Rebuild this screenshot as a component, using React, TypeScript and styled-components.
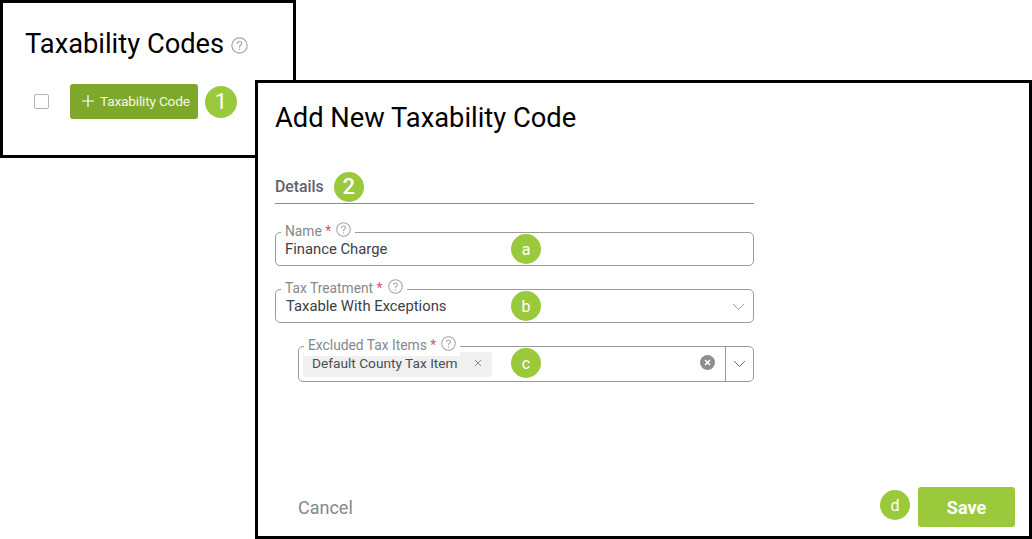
import React from "react";
import styled, { createGlobalStyle } from "styled-components";

const GlobalStyle = createGlobalStyle`
  html, body {
    margin: 0;
    padding: 0;
    background: #fff;
  }
  body {
    font-family: Roboto, "Liberation Sans", sans-serif;
  }
`;

const Page = styled.div`
  position: relative;
  width: 1032px;
  height: 539px;
  overflow: hidden;
  background: #fff;
`;

const ListPanel = styled.section`
  box-sizing: border-box;
  width: 296px;
  height: 158px;
  border: 3px solid #000;
  padding: 22px 0 0 22px;
`;

const PageTitle = styled.div`
  display: flex;
  align-items: center;
  gap: 7px;
  height: 38px;
  color: #000;
  h1 {
    margin: 0;
    font-size: 27.3px;
    font-weight: 400;
    line-height: 38px;
  }
  svg {
    margin-top: 3px;
  }
`;

const Toolbar = styled.div`
  display: flex;
  align-items: center;
  margin-top: 21px;
  padding-left: 9px;
`;

const Checkbox = styled.span`
  box-sizing: border-box;
  width: 15px;
  height: 15px;
  border: 1px solid #b4b4b4;
  border-radius: 2px;
  margin-right: 21px;
`;

const AddButton = styled.button`
  display: flex;
  align-items: center;
  gap: 6px;
  box-sizing: border-box;
  width: 128px;
  height: 35px;
  padding: 0 0 2px 12px;
  border: 0;
  border-radius: 3px;
  background: #7ea82c;
  color: #f4f8ea;
  font-family: inherit;
  font-size: 13.7px;
  letter-spacing: -0.2px;
`;

const Badge = styled.span<{ $size?: number; $font?: number }>`
  display: inline-flex;
  align-items: center;
  justify-content: center;
  flex: none;
  width: ${(p) => p.$size ?? 30}px;
  height: ${(p) => p.$size ?? 30}px;
  border-radius: 50%;
  background: #9aca3c;
  color: #fff;
  font-size: ${(p) => p.$font ?? 16}px;
`;

const ToolbarBadge = styled(Badge)`
  margin-left: 7px;
`;

const FormPanel = styled.section`
  position: absolute;
  left: 255px;
  top: 80px;
  box-sizing: border-box;
  width: 777px;
  height: 459px;
  display: flex;
  flex-direction: column;
  border: 3px solid #000;
  background: #fff;
  padding: 18px 14px 9px 17px;
`;

const FormTitle = styled.h2`
  margin: 0;
  font-size: 27.3px;
  font-weight: 400;
  line-height: 34px;
  color: #000;
`;

const Form = styled.div`
  width: 479px;
  flex: 1;
`;

const SectionHead = styled.div`
  display: flex;
  align-items: center;
  gap: 10px;
  box-sizing: border-box;
  height: 36px;
  margin-top: 33px;
  padding-top: 2px;
  border-bottom: 1px solid #8c8c8c;
  color: #5f6368;
  font-size: 15.8px;
  font-weight: 500;
`;

const Field = styled.div<{ $indent?: number; $height?: number; $gap?: number; $inset?: number }>`
  position: relative;
  box-sizing: border-box;
  display: flex;
  align-items: center;
  height: ${(p) => p.$height ?? 34}px;
  margin-top: ${(p) => p.$gap ?? 23}px;
  margin-left: ${(p) => p.$indent ?? 0}px;
  padding-left: ${(p) => p.$inset ?? 10}px;
  border: 1px solid #9a9a9a;
  border-radius: 5px;
  color: #3c4043;
  font-size: 14.8px;
`;

const FieldLabel = styled.label`
  position: absolute;
  left: 5px;
  top: -13px;
  display: flex;
  align-items: center;
  gap: 5px;
  height: 22px;
  padding: 0 4px;
  background: #fff;
  color: #85888c;
  font-size: 13.8px;
  line-height: 20px;
  em {
    color: #e0526a;
    font-style: normal;
  }
  svg {
    margin-top: -3px;
  }
`;

const FieldBadge = styled(Badge)<{ $left?: number }>`
  position: absolute;
  left: ${(p) => p.$left ?? 235}px;
  top: 1px;
`;

const SelectArrow = styled.span`
  position: absolute;
  right: 8px;
  top: 13px;
  display: flex;
  color: #9a9a9a;
`;

const Chip = styled.span`
  display: flex;
  align-items: center;
  gap: 16px;
  box-sizing: border-box;
  width: 189px;
  height: 25px;
  margin-left: -6px;
  padding: 0 0 2px 9px;
  border-radius: 3px;
  background: #f0f0f0;
  color: #4a4e52;
  font-size: 13.7px;
  white-space: nowrap;
`;

const ClearButton = styled.span`
  position: absolute;
  right: 38px;
  top: 8px;
  display: flex;
`;

const ArrowCell = styled.span`
  position: absolute;
  right: 0;
  top: 0;
  bottom: 0;
  width: 27px;
  display: flex;
  align-items: center;
  justify-content: center;
  border-left: 1px solid #9a9a9a;
  color: #6f6f6f;
`;

const Footer = styled.div`
  display: flex;
  align-items: center;
  padding-left: 23px;
`;

const CancelLink = styled.span`
  color: #85888c;
  font-size: 18px;
  margin-right: auto;
`;

const FooterBadge = styled(Badge)`
  margin-bottom: 4px;
`;

const SaveButton = styled.button`
  width: 97px;
  height: 40px;
  margin-left: 8px;
  border: 0;
  border-radius: 3px;
  background: #9aca3c;
  color: #fff;
  font-family: inherit;
  font-size: 18px;
  font-weight: 700;
`;

const HelpIcon = ({ size = 15 }: { size?: number }) => (
  <svg width={size} height={size} viewBox="0 0 16 16" fill="none">
    <circle cx="8" cy="8" r="7.2" stroke="#a3a3a3" strokeWidth="1.1" />
    <path
      d="M5.9 6.2c0-1.2 1-2 2.1-2s2.1.8 2.1 1.9c0 1.6-2.1 1.7-2.1 3.3"
      stroke="#a3a3a3"
      strokeWidth="1.1"
      strokeLinecap="round"
    />
    <circle cx="8" cy="11.6" r=".7" fill="#a3a3a3" />
  </svg>
);

const Chevron = () => (
  <svg width="13" height="8" viewBox="0 0 13 8" fill="none">
    <path d="M1 1l5.5 5.5L12 1" stroke="currentColor" strokeWidth="1" />
  </svg>
);

const App = () => {
  return (
    <Page>
      <GlobalStyle />
      <ListPanel>
        <PageTitle>
          <h1>Taxability Codes</h1>
          <HelpIcon size={17} />
        </PageTitle>
        <Toolbar>
          <Checkbox />
          <AddButton>
            <svg width="12" height="12" viewBox="0 0 12 12" fill="none">
              <path d="M6 0v12M0 6h12" stroke="#fff" strokeWidth="1.2" />
            </svg>
            Taxability Code
          </AddButton>
          <ToolbarBadge $size={32} $font={22}>
            1
          </ToolbarBadge>
        </Toolbar>
      </ListPanel>

      <FormPanel>
        <FormTitle>Add New Taxability Code</FormTitle>
        <Form>
          <SectionHead>
            Details
            <Badge $font={22}>2</Badge>
          </SectionHead>
          <Field $gap={28} $inset={9}>
            <FieldLabel>
              <span>
                Name <em>*</em>
              </span>
              <HelpIcon />
            </FieldLabel>
            Finance Charge
            <FieldBadge>a</FieldBadge>
          </Field>
          <Field>
            <FieldLabel>
              <span>
                Tax Treatment <em>*</em>
              </span>
              <HelpIcon />
            </FieldLabel>
            Taxable With Exceptions
            <FieldBadge>b</FieldBadge>
            <SelectArrow>
              <Chevron />
            </SelectArrow>
          </Field>
          <Field $indent={23} $height={36}>
            <FieldLabel>
              <span>
                Excluded Tax Items <em>*</em>
              </span>
              <HelpIcon />
            </FieldLabel>
            <Chip>
              Default County Tax Item
              <svg width="8" height="8" viewBox="0 0 8 8" fill="none">
                <path d="M1 1l6 6M7 1L1 7" stroke="#8c8c8c" strokeWidth="1" />
              </svg>
            </Chip>
            <FieldBadge $left={212}>c</FieldBadge>
            <ClearButton>
              <svg width="15" height="15" viewBox="0 0 15 15">
                <circle cx="7.5" cy="7.5" r="7.5" fill="#8e8e8e" />
                <path d="M5 5l5 5M10 5l-5 5" stroke="#fff" strokeWidth="1.6" />
              </svg>
            </ClearButton>
            <ArrowCell>
              <Chevron />
            </ArrowCell>
          </Field>
        </Form>
        <Footer>
          <CancelLink>Cancel</CancelLink>
          <FooterBadge>d</FooterBadge>
          <SaveButton>Save</SaveButton>
        </Footer>
      </FormPanel>
    </Page>
  );
};

export default App;
